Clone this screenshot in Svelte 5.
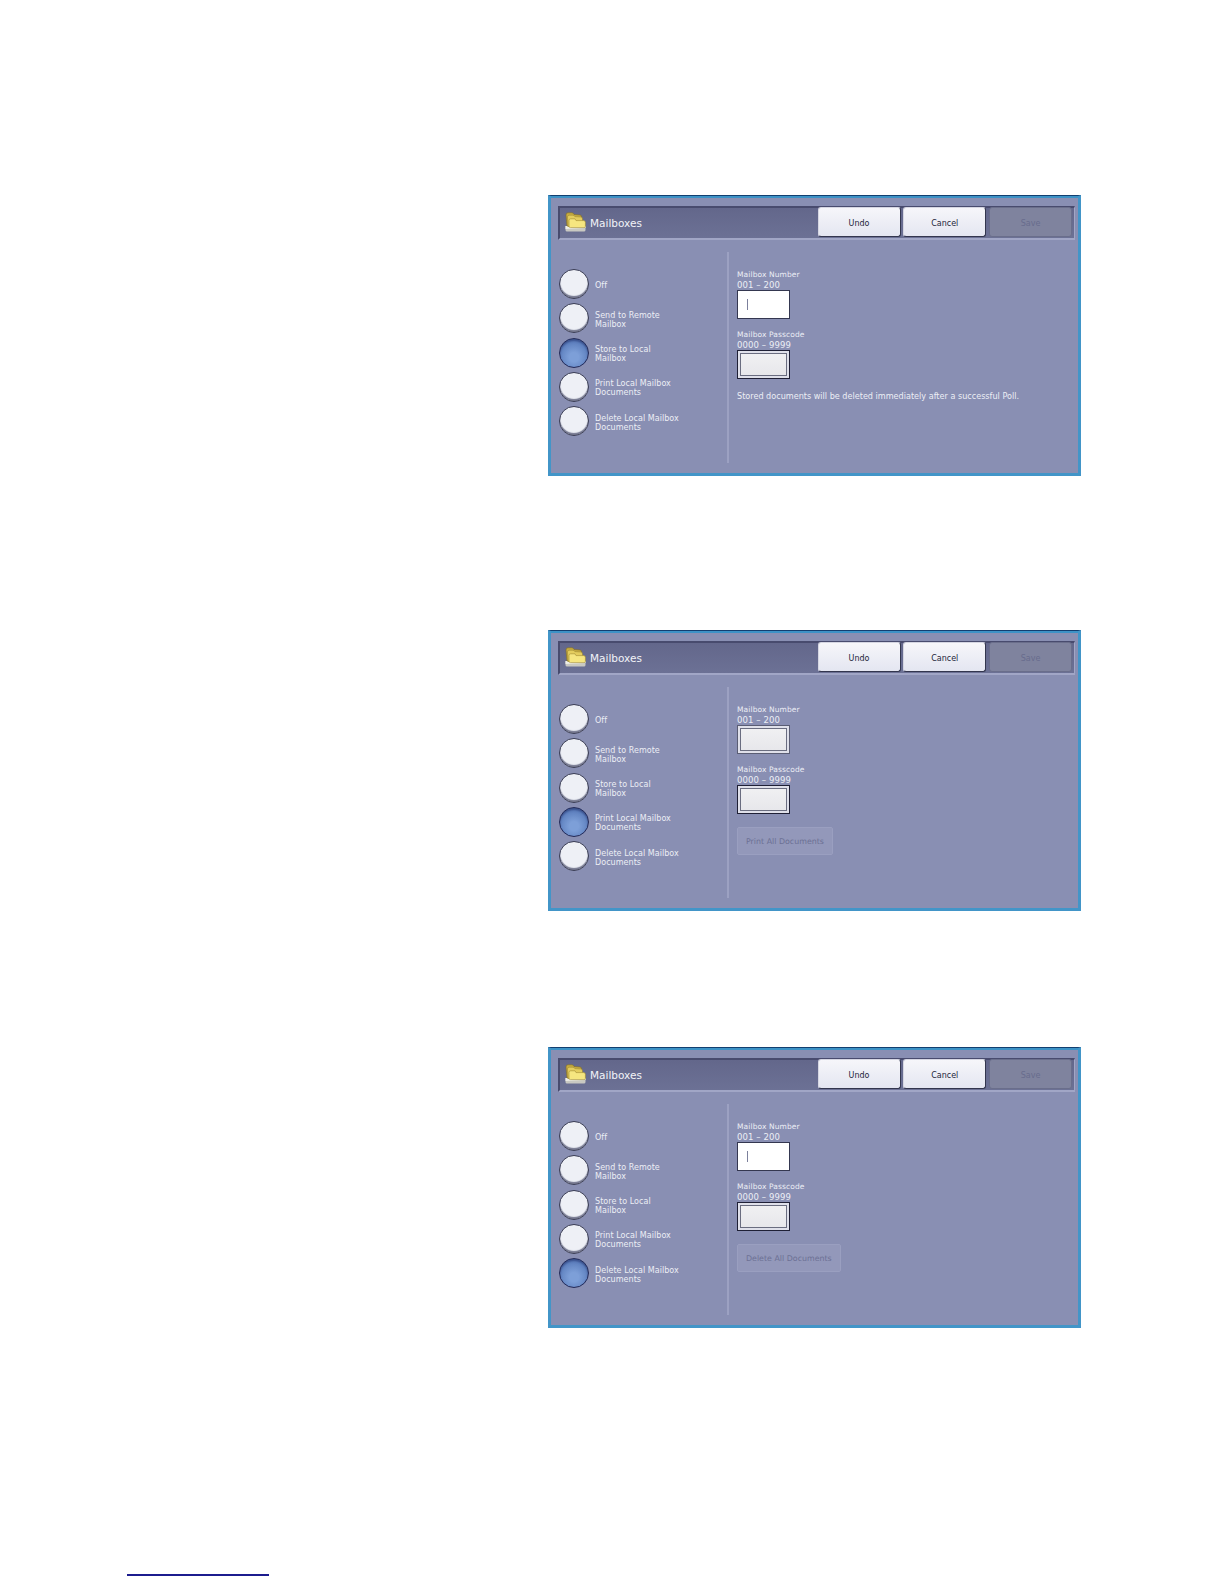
<script>
  const options = [
    ['Off'],
    ['Send to Remote', 'Mailbox'],
    ['Store to Local', 'Mailbox'],
    ['Print Local Mailbox', 'Documents'],
    ['Delete Local Mailbox', 'Documents']
  ];

  const panels = [
    { selected: 2, numberFocus: true, note: 'Stored documents will be deleted immediately after a successful Poll.' },
    { selected: 3, numberFocus: false, action: 'Print All Documents', gap: 'second' },
    { selected: 4, numberFocus: true, action: 'Delete All Documents', gap: 'third' }
  ];
</script>

{#snippet folder()}
  <svg class="folder" viewBox="0 0 21 20" width="21" height="20" aria-hidden="true">
    <path d="M0.5 14 L0.5 18 Q0.5 19.5 2 19.5 L19 19.5 Q20.5 19.5 20.5 18 L20.5 14 Z" fill="#c9c9c2" />
    <path d="M0.5 14 L20.5 14 L20.5 16 L0.5 17 Z" fill="#efefe8" />
    <path d="M1 3 Q1 0.8 3 0.8 L7 0.8 Q8.5 0.8 9 2.5 L15 3 Q16.5 3 16.5 5 L16.5 14 L2 14 Z" fill="#c9ae42" stroke="#7f6c25" stroke-width=".6" />
    <path d="M2.5 5 Q2.5 3.2 4 3.2 L8 3.2 Q9.4 3.2 9.8 4.6 L16 5 Q17.5 5 17.5 7 L17.5 14 L3 14.5 Z" fill="#e4cd5e" stroke="#927e2c" stroke-width=".5" />
    <path d="M4 8.5 Q4 6.8 5.6 6.8 L10 6.8 L11 8.6 L18.8 8.6 Q20.4 8.6 20.4 10.2 L20.4 14.6 Q20.4 15.6 19 15.6 L5.4 15.6 Q4 15.6 4 14.2 Z" fill="#f6e680" stroke="#a08a30" stroke-width=".6" />
  </svg>
{/snippet}

<div class="page">
  {#each panels as panel}
    <section class="panel {panel.gap ?? ''}">
      <header class="titlebar">
        {@render folder()}
        <span class="title">Mailboxes</span>
        <div class="buttons">
          <button class="btn">Undo</button>
          <button class="btn">Cancel</button>
          <button class="btn off">Save</button>
        </div>
      </header>

      <div class="body">
        <div class="options">
          {#each options as lines, i}
            <div class="option">
              <span class="radio" class:on={panel.selected === i}></span>
              <span class="option-label">
                {#each lines as line}<span>{line}</span>{/each}
              </span>
            </div>
          {/each}
        </div>

        <div class="fields">
          <div class="field-label">Mailbox Number<br /><span>001 – 200</span></div>
          {#if panel.numberFocus}
            <div class="input focus"><i></i></div>
          {:else}
            <div class="input raised grey"></div>
          {/if}

          <div class="field-label next">Mailbox Passcode<br /><span>0000 – 9999</span></div>
          <div class="input raised"></div>

          {#if panel.note}
            <p class="note">{panel.note}</p>
          {/if}
          {#if panel.action}
            <button class="action">{panel.action}</button>
          {/if}
        </div>
      </div>
    </section>
  {/each}
  <div class="rule"></div>
</div>

<style>
  :global(body) {
    margin: 0;
    background: #fff;
  }

  .page {
    height: 1584px;
    box-sizing: border-box;
    padding-top: 195px;
    overflow: hidden;
    font-family: 'DejaVu Sans', sans-serif;
  }

  .panel {
    box-sizing: border-box;
    width: 533px;
    height: 281px;
    margin-left: 548px;
    padding: 10px 3px 0 7px;
    background: #898fb3;
    border: 3px solid #4295c8;
    border-top: 1px solid #123f70;
    box-shadow: inset 0 2px #3d92c6;
  }

  .panel.second {
    margin-top: 154px;
  }

  .panel.third {
    margin-top: 136px;
  }

  .titlebar {
    display: flex;
    align-items: center;
    height: 34px;
    box-sizing: border-box;
    padding-left: 5px;
    background: linear-gradient(#63678b, #6c7195);
    border-top: 2px solid #484b6e;
    border-left: 2px solid #484b6e;
    border-bottom: 2px solid #a1a6c6;
    border-right: 1px solid #a1a6c6;
  }

  .folder {
    flex: none;
    margin-top: -2px;
  }

  .title {
    margin-left: 4px;
    font-size: 10.5px;
    color: #f2f3f8;
  }

  .buttons {
    display: flex;
    gap: 2.75px;
    align-self: flex-start;
    margin: -1px 2px 0 auto;
  }

  .btn {
    box-sizing: border-box;
    width: 83px;
    height: 30px;
    padding: 2px 0 0;
    border: 1px solid #33364e;
    border-top-color: #d5d6e2;
    border-left-color: #d5d6e2;
    border-radius: 3px;
    background: linear-gradient(#f6f6fa, #e4e6f1);
    font-family: inherit;
    font-size: 8px;
    color: #23253a;
  }

  .btn.off {
    background: #7f839e;
    border-color: #6a6e8b;
    color: #686c8d;
  }

  .body {
    display: flex;
    height: 211px;
    margin-top: 12px;
  }

  .options {
    box-sizing: border-box;
    flex: none;
    width: 171px;
    padding: 17px 0 0 1px;
    border-right: 2px solid #9ca1c2;
  }

  .option {
    display: flex;
    align-items: center;
    gap: 6px;
    height: 30px;
    margin-bottom: 4.25px;
  }

  .radio {
    flex: none;
    box-sizing: border-box;
    width: 30px;
    height: 30px;
    border-radius: 50%;
    border: 1px solid #3b3e55;
    background: radial-gradient(circle at 50% 45%, #eef0f6 60%, #d8dae6 100%);
    box-shadow: inset 0 -2px 1px #74778f;
  }

  .radio.on {
    border-color: #232a58;
    background: radial-gradient(circle at 50% 65%, #7d9fd8 20%, #4d6fb0 90%);
    box-shadow: inset 0 2px 2px #39508c;
  }

  .option-label {
    display: flex;
    flex-direction: column;
    padding-top: 3px;
    font-size: 8px;
    line-height: 9px;
    letter-spacing: 0.05px;
    color: #eceef5;
  }

  .fields {
    padding: 18px 0 0 8px;
  }

  .field-label {
    font-size: 7.5px;
    line-height: 10px;
    letter-spacing: 0.1px;
    color: #eceef5;
  }

  .field-label span {
    font-size: 8.5px;
  }

  .field-label.next {
    margin-top: 11px;
  }

  .input {
    box-sizing: border-box;
    width: 53px;
    height: 29px;
    margin-top: -1px;
  }

  .input.focus {
    display: flex;
    align-items: center;
    padding-left: 9px;
    background: #fff;
    border: 1px solid #343750;
  }

  .input.focus i {
    width: 1px;
    height: 11px;
    background: #7c809c;
  }

  .input.raised {
    background: linear-gradient(#f1f1f3, #e6e6ea);
    border: 1px solid #1f2036;
    box-shadow: inset 0 0 0 2px #dfe0ea, inset 0 0 0 3px #6a6d80;
  }

  .input.raised.grey {
    border-color: #5a5d74;
  }

  .note {
    margin: 12px 0 0;
    font-size: 8.1px;
    line-height: 10px;
    white-space: nowrap;
    color: #eceef5;
  }

  .action {
    display: block;
    height: 28px;
    margin-top: 13px;
    padding: 0 8px;
    border: 1px solid #9a9fc0;
    border-radius: 2px;
    background: #9398ba;
    font-family: inherit;
    font-size: 7.9px;
    color: #6c7094;
  }

  .rule {
    width: 142px;
    height: 2px;
    margin: 246px 0 0 127px;
    background: #1c1c8e;
  }
</style>
